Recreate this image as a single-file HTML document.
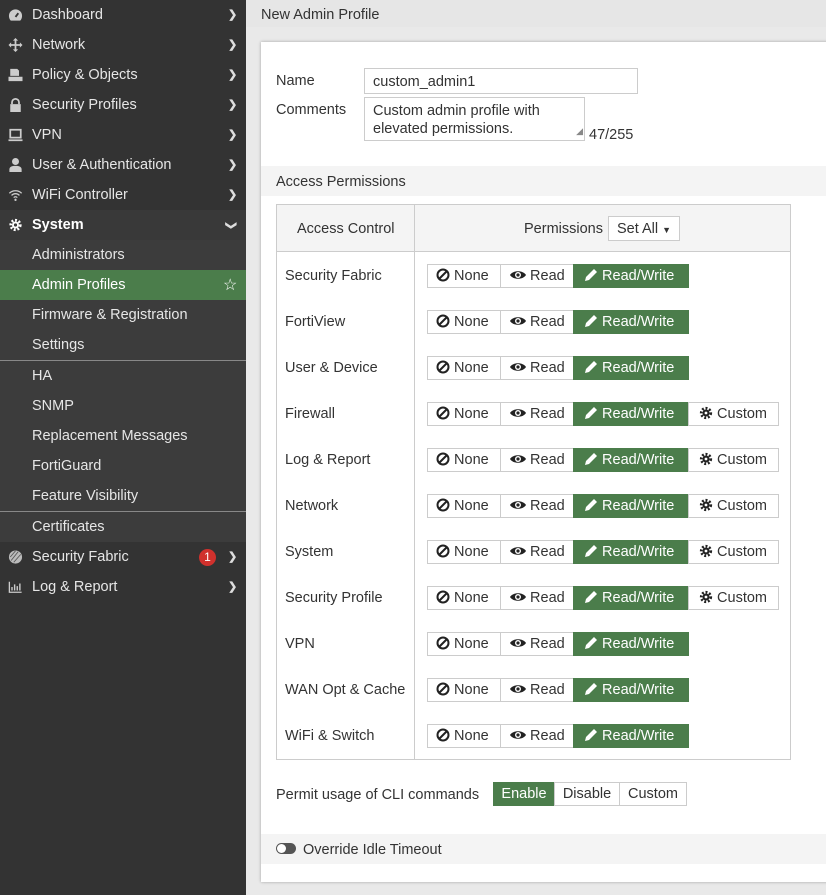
<!DOCTYPE html>
<html><head><meta charset="utf-8"><style>
*{box-sizing:border-box;margin:0;padding:0}
body{width:826px;height:895px;overflow:hidden;background:#e9e9e9;font-family:"Liberation Sans",sans-serif;font-size:14px;color:#333;position:relative}
#side{position:absolute;left:0;top:0;width:246px;height:895px;background:#333}
.it{position:absolute;left:0;width:246px;height:30px;line-height:31px;color:#e6e6e6;font-size:14.5px}
.it .t{position:absolute;left:32px}
.it .ic{position:absolute;left:8px;top:8px;width:15px;height:14px}
.it .ch{position:absolute;left:228px;top:0;font-size:11px;color:#ddd;font-weight:bold}
.sub{background:#3c3c3c}
.ab{position:absolute}
#hdr{position:absolute;left:246px;top:0;width:580px;height:27px;background:#e6e6e6;font-size:14.5px;line-height:30px;padding-left:15px}
#card{position:absolute;left:261px;top:42px;width:570px;height:840px;background:#fff;box-shadow:0 0 3px rgba(0,0,0,.3)}
.btn{position:absolute;height:24px;line-height:23px;border:1px solid #ccc;background:#fff;font-size:14.5px;color:#333}
.btn.g{background:#4b7d4b;border-color:#4b7d4b;color:#fff}
.lab{position:absolute;left:285px;font-size:14.5px}
</style></head><body>
<div id="side">
 <div class="it" style="top:0"><svg class="ic" viewBox="0 0 16 14"><path d="M8 1a7 7 0 0 0-7 7c0 2 1 4 2 5h10c1-1 2-3 2-5a7 7 0 0 0-7-7z" fill="#ccc"/><path d="M8 9l3-4" stroke="#333" stroke-width="2"/></svg><span class="t">Dashboard</span><span class="ch">❯</span></div>
 <div class="it" style="top:30px"><svg class="ic" viewBox="0 0 16 16"><path d="M8 0l3 3H9v4h4V5l3 3-3 3V9H9v4h2l-3 3-3-3h2V9H3v2L0 8l3-3v2h4V3H5z" fill="#ccc"/></svg><span class="t">Network</span><span class="ch">❯</span></div>
 <div class="it" style="top:60px"><svg class="ic" viewBox="0 0 16 16"><path d="M2 1h8l2 2v6H2z M0 10h16v5H0z" fill="#ccc"/></svg><span class="t">Policy &amp; Objects</span><span class="ch">❯</span></div>
 <div class="it" style="top:90px"><svg class="ic" viewBox="0 0 16 16"><path d="M4 7V5a4 4 0 0 1 8 0v2" stroke="#ccc" stroke-width="2" fill="none"/><rect x="2" y="7" width="12" height="9" fill="#ccc"/></svg><span class="t">Security Profiles</span><span class="ch">❯</span></div>
 <div class="it" style="top:120px"><svg class="ic" viewBox="0 0 16 16"><rect x="2" y="2" width="12" height="9" stroke="#ccc" stroke-width="2" fill="none"/><rect x="0" y="13" width="16" height="2" fill="#ccc"/></svg><span class="t">VPN</span><span class="ch">❯</span></div>
 <div class="it" style="top:150px"><svg class="ic" viewBox="0 0 16 16"><circle cx="8" cy="4" r="4" fill="#ccc"/><path d="M1 16v-3c0-3 3-4 7-4s7 1 7 4v3z" fill="#ccc"/></svg><span class="t">User &amp; Authentication</span><span class="ch">❯</span></div>
 <div class="it" style="top:180px"><svg class="ic" viewBox="0 0 16 16"><path d="M1 6a10 10 0 0 1 14 0M3.5 8.5a6 6 0 0 1 9 0M6 11a2.5 2.5 0 0 1 4 0" stroke="#ccc" stroke-width="1.5" fill="none"/><circle cx="8" cy="13.5" r="1.3" fill="#ccc"/></svg><span class="t">WiFi Controller</span><span class="ch">❯</span></div>
 <div class="it" style="top:210px;background:#393939;color:#fff;font-weight:bold"><svg class="ic" viewBox="0 0 16 16"><circle cx="8" cy="8" r="5.5" fill="none" stroke="#fff" stroke-width="3" stroke-dasharray="2.2 2"/><circle cx="8" cy="8" r="4" fill="#fff"/><circle cx="8" cy="8" r="1.8" fill="#393939"/></svg><span class="t">System</span><span class="ch" style="transform:rotate(90deg);left:226px">❯</span></div>
 <div class="it sub" style="top:240px"><span class="t">Administrators</span></div>
 <div class="it" style="top:270px;background:#4b7d4b;color:#fff"><span class="t">Admin Profiles</span><span class="ch" style="left:223px;font-size:16px;color:#fff;font-weight:normal">☆</span></div>
 <div class="it sub" style="top:300px"><span class="t">Firmware &amp; Registration</span></div>
 <div class="it sub" style="top:330px;height:31px;border-bottom:1px solid #888"><span class="t">Settings</span></div>
 <div class="it sub" style="top:361px"><span class="t">HA</span></div>
 <div class="it sub" style="top:391px"><span class="t">SNMP</span></div>
 <div class="it sub" style="top:421px"><span class="t">Replacement Messages</span></div>
 <div class="it sub" style="top:451px"><span class="t">FortiGuard</span></div>
 <div class="it sub" style="top:481px;height:31px;border-bottom:1px solid #888"><span class="t">Feature Visibility</span></div>
 <div class="it sub" style="top:512px"><span class="t">Certificates</span></div>
 <div class="it" style="top:542px"><svg class="ic" viewBox="0 0 16 16"><circle cx="8" cy="8" r="7.5" fill="#bbb"/><path d="M3 12L11 2M6 14L14 5M2 8l6-7" stroke="#555" stroke-width="1"/></svg><span class="t">Security Fabric</span><span class="ab" style="left:199px;top:7px;width:17px;height:17px;border-radius:50%;background:#d0312d;color:#fff;font-size:12px;line-height:17px;text-align:center">1</span><span class="ch">❯</span></div>
 <div class="it" style="top:572px"><svg class="ic" viewBox="0 0 16 16"><path d="M1 2v12h14" stroke="#ccc" stroke-width="1.5" fill="none"/><path d="M4 12V8M7 12V5M10 12V7M13 12V4" stroke="#ccc" stroke-width="1.6"/></svg><span class="t">Log &amp; Report</span><span class="ch">❯</span></div>
</div>
<div id="hdr">New Admin Profile</div>
<div id="card"></div>
<div class="lab" style="left:276px;top:73px">Name</div>
<div class="ab" style="left:364px;top:68px;width:274px;height:26px;border:1px solid #ccc;padding-left:8px;line-height:26px;font-size:14.5px">custom_admin1</div>
<div class="lab" style="left:276px;top:102px">Comments</div>
<div class="ab" style="left:364px;top:97px;width:221px;height:44px;border:1px solid #ccc;padding:4px 8px;line-height:18px;font-size:14.5px">Custom admin profile with elevated permissions.<span class="ab" style="right:1px;bottom:0;font-size:9px;color:#888">◢</span></div>
<div class="ab" style="left:589px;top:127px;font-size:14.5px">47/255</div>
<div class="ab" style="left:261px;top:166px;width:565px;height:30px;background:#f4f4f4;padding-left:15px;line-height:32px;font-size:14.5px">Access Permissions</div>
<div class="ab" style="left:276px;top:204px;width:515px;height:556px;border:1px solid #ccc"></div>
<div class="ab" style="left:277px;top:205px;width:513px;height:47px;background:#f4f4f4;border-bottom:1px solid #ccc"></div>
<div class="ab" style="left:414px;top:205px;width:1px;height:554px;background:#ccc"></div>
<div class="ab" style="left:297px;top:221px;font-size:14.5px">Access Control</div>
<div class="ab" style="left:524px;top:221px;font-size:14.5px">Permissions</div>
<div class="btn" style="left:608px;top:216px;width:72px;padding-left:8px;height:25px;line-height:25px">Set All <span style="font-size:9px">▼</span></div>
<div id="rows"></div>
<div class="lab" style="left:276px;top:787px">Permit usage of CLI commands</div>
<div class="btn g" style="left:493px;top:782px;width:62px;text-align:center">Enable</div>
<div class="btn" style="left:554px;top:782px;width:66px;text-align:center">Disable</div>
<div class="btn" style="left:619px;top:782px;width:68px;text-align:center">Custom</div>
<div class="ab" style="left:261px;top:834px;width:565px;height:30px;background:#f4f4f4"></div>
<div class="ab" style="left:276px;top:843px;width:20px;height:11px;border-radius:6px;background:#555"><div class="ab" style="left:1px;top:1px;width:9px;height:9px;border-radius:50%;background:#fff"></div></div>
<div class="ab" style="left:303px;top:842px;font-size:14.5px">Override Idle Timeout</div>
<script>
var names=["Security Fabric","FortiView","User & Device","Firewall","Log & Report","Network","System","Security Profile","VPN","WAN Opt & Cache","WiFi & Switch"];
var cust=[0,0,0,1,1,1,1,1,0,0,0];
var none='<svg width="14" height="14" viewBox="0 0 14 14" style="vertical-align:-2px"><circle cx="7" cy="7" r="5.5" fill="none" stroke="#222" stroke-width="2"/><path d="M3 11L11 3" stroke="#222" stroke-width="2"/></svg>';
var eye='<svg width="16" height="12" viewBox="0 0 16 12" style="vertical-align:-1px"><path d="M0 6C3 1 13 1 16 6C13 11 3 11 0 6z" fill="#222"/><circle cx="8" cy="6" r="3" fill="#fff"/><circle cx="8" cy="6" r="1.6" fill="#222"/></svg>';
var pen='<svg width="14" height="14" viewBox="0 0 14 14" style="vertical-align:-2px"><path d="M1 13l1-4 8-8 3 3-8 8z" fill="#fff"/></svg>';
var gear='<svg width="14" height="14" viewBox="0 0 16 16" style="vertical-align:-2px"><circle cx="8" cy="8" r="5.5" fill="none" stroke="#222" stroke-width="3" stroke-dasharray="2.2 2"/><circle cx="8" cy="8" r="4" fill="#222"/><circle cx="8" cy="8" r="1.6" fill="#fff"/></svg>';
var h='';
for(var i=0;i<11;i++){var c=276+46*i;
h+='<div class="lab" style="top:'+(c-8)+'px">'+names[i].replace('&','&amp;')+'</div>';
h+='<div class="btn" style="left:427px;top:'+(c-12)+'px;width:74px;padding-left:8px">'+none+' None</div>';
h+='<div class="btn" style="left:500px;top:'+(c-12)+'px;width:74px;padding-left:9px">'+eye+' Read</div>';
h+='<div class="btn g" style="left:573px;top:'+(c-12)+'px;width:116px;padding-left:10px">'+pen+' Read/Write</div>';
if(cust[i])h+='<div class="btn" style="left:688px;top:'+(c-12)+'px;width:91px;padding-left:10px">'+gear+' Custom</div>';}
document.getElementById('rows').innerHTML=h;
</script>
</body></html>
